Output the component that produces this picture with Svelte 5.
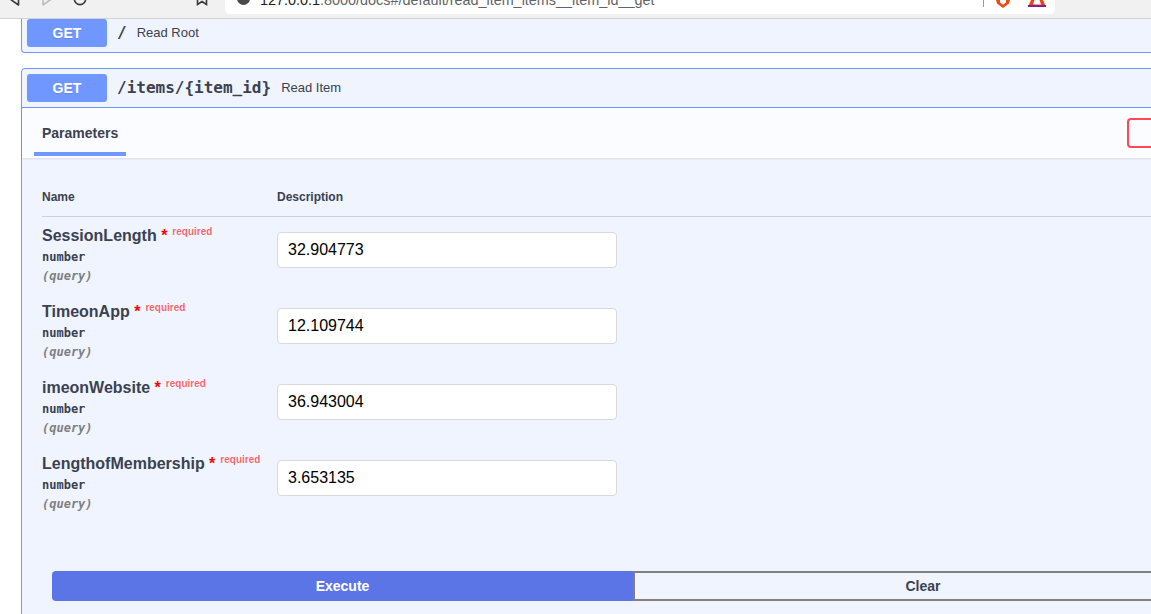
<script>
    const params = [
        { name: 'SessionLength', value: '32.904773' },
        { name: 'TimeonApp', value: '12.109744' },
        { name: 'imeonWebsite', value: '36.943004' },
        { name: 'LengthofMembership', value: '3.653135' }
    ];
</script>

<div class="page">
    <header class="toolbar">
        <div class="nav">
            <svg class="back" width="14" height="14" viewBox="0 0 14 14"><path d="M11.500 1 3 7l8.500 6z" fill="none" stroke="#3a3a3a" stroke-width="1.6" stroke-linejoin="round" /></svg>
            <svg class="forward" width="14" height="14" viewBox="0 0 14 14"><path d="M3 1l8.500 6L3 13z" fill="none" stroke="#bdbdbd" stroke-width="1.6" stroke-linejoin="round" /></svg>
            <svg class="reload" width="14" height="14" viewBox="0 0 14 14"><circle cx="7" cy="7" r="5.6" fill="none" stroke="#3a3a3a" stroke-width="1.6" /></svg>
        </div>
        <svg class="bookmark" width="12" height="14" viewBox="0 0 12 14"><path d="M1.500 0v12.500L6 9.500l4.500 3V0z" fill="none" stroke="#3a3a3a" stroke-width="1.6" /></svg>
        <div class="urlbar">
            <span class="info"><span class="info-dot"></span></span>
            <span class="url"><span class="host">127.0.0.1</span>:8000/docs#/default/read_item_items__item_id__get</span>
            <span class="divider"></span>
            <svg class="shield" width="14" height="8" viewBox="0 0 14 8"><path d="M0 0h14l-1 3.500L7 8 1 3.500z" fill="#f1490f" /><path d="M4 0h6v2.500L7 4.800 4 2.500z" fill="#fff" /></svg>
            <svg class="triangle" width="18" height="7" viewBox="0 0 18 7"><path d="M3 0h12l3 7H0z" fill="#f0440f" /><path d="M6.500 0h5L13 4.500H5z" fill="#fff" /><rect x="0" y="5" width="18" height="2" fill="#8b1a9b" /></svg>
        </div>
    </header>

    <div class="opblock first">
        <div class="summary">
            <span class="method">GET</span>
            <span class="path">/</span>
            <span class="desc">Read Root</span>
        </div>
    </div>

    <div class="opblock second">
        <div class="summary">
            <span class="method">GET</span>
            <span class="path">/items/&#123;item_id&#125;</span>
            <span class="desc">Read Item</span>
        </div>
        <div class="tabs">
            <span class="tab">Parameters</span>
            <span class="cancel"></span>
        </div>
        <div class="body">
            <div class="columns">
                <span class="col-name">Name</span>
                <span>Description</span>
            </div>
            {#each params as p}
                <div class="param">
                    <div class="col-name">
                        <div class="param-name">{p.name}<span class="star">&nbsp;*</span><span class="required">required</span></div>
                        <div class="type">number</div>
                        <div class="in">(query)</div>
                    </div>
                    <input type="text" value={p.value} />
                </div>
            {/each}
            <div class="actions">
                <button type="button" class="execute">Execute</button>
                <button type="button" class="clear">Clear</button>
            </div>
        </div>
    </div>
</div>

<style>
    :global(body) {
        margin: 0;
        background: #fff;
        overflow: hidden;
    }

    .page {
        width: 1151px;
        height: 614px;
        overflow: hidden;
        font-family: "Open Sans", "Liberation Sans", sans-serif;
        color: #3b4151;
    }

    .toolbar {
        height: 18px;
        background: #f1f1f1;
        border-bottom: 1px solid #d4d4d4;
        display: flex;
        overflow: hidden;
    }

    .nav {
        display: flex;
        width: 196px;
        flex: none;
        padding-left: 7px;
        box-sizing: border-box;
        gap: 19px;
        margin-top: -8px;
    }

    .nav svg {
        flex: none;
    }

    .bookmark {
        flex: none;
        margin-top: -8px;
    }

    .urlbar {
        width: 830px;
        height: 14px;
        margin-left: 17px;
        background: #fff;
        border-radius: 0 0 5px 5px;
        display: flex;
        align-items: flex-start;
        flex: none;
        box-sizing: border-box;
        padding-left: 12px;
    }

    .info {
        width: 13px;
        height: 13px;
        border-radius: 50%;
        background: #4a4a4a;
        margin-top: -8px;
        flex: none;
        display: flex;
        justify-content: center;
        align-items: center;
    }

    .info-dot {
        width: 2px;
        height: 2px;
        background: #fff;
    }

    .url {
        font-family: "Liberation Sans", sans-serif;
        font-size: 14.4px;
        line-height: 16px;
        color: #5f6368;
        margin: -8px 0 0 10px;
        width: 723px;
        white-space: nowrap;
        flex: none;
    }

    .host {
        color: #202124;
    }

    .divider {
        width: 1px;
        height: 7px;
        background: #9a9a9a;
        flex: none;
    }

    .shield {
        margin-left: 12px;
        flex: none;
    }

    .triangle {
        margin-left: 18px;
        flex: none;
    }

    .opblock {
        width: 1200px;
        margin-left: 21px;
        box-sizing: border-box;
        background: #eff4ff;
        border: 1px solid #6f97ff;
        border-radius: 4px;
        box-shadow: 0 0 2px rgba(0, 0, 0, 0.06);
        font-family: "Liberation Sans", sans-serif;
    }

    .first {
        border-top: none;
        border-radius: 0 0 4px 4px;
        height: 34px;
        margin-bottom: 15px;
    }

    .first .summary {
        padding-top: 0;
        height: 33px;
    }

    .second {
        height: 600px;
    }

    .summary {
        height: 39px;
        box-sizing: border-box;
        padding: 5px;
        display: flex;
        align-items: center;
    }

    .second .summary {
        border-bottom: 1px solid #6f97ff;
    }

    .method {
        width: 80px;
        height: 28px;
        flex: none;
        box-sizing: border-box;
        background: #6f97ff;
        border-radius: 3px;
        color: #fff;
        font-size: 14px;
        font-weight: 700;
        display: flex;
        align-items: center;
        justify-content: center;
        text-shadow: 0 1px 0 rgba(0, 0, 0, 0.1);
    }

    .path {
        font-family: "DejaVu Sans Mono", monospace;
        font-size: 16px;
        font-weight: 600;
        padding: 0 10px;
        margin-bottom: 2px;
    }

    .desc {
        font-size: 13px;
        color: #3b4151;
        margin-bottom: 2px;
    }

    .tabs {
        height: 50px;
        box-sizing: border-box;
        background: #fbfcff;
        box-shadow: 0 1px 2px rgba(0, 0, 0, 0.1);
        padding-left: 12px;
        display: flex;
    }

    .tab {
        font-size: 14px;
        font-weight: 700;
        padding: 17px 8px 0;
        width: 92px;
        box-sizing: border-box;
        height: 48px;
        border-bottom: 4px solid #6f97ff;
    }

    .cancel {
        width: 60px;
        height: 30px;
        box-sizing: border-box;
        margin: 10px 0 0 1001px;
        border: 2px solid #ff4757;
        border-radius: 4px;
        flex: none;
    }

    .body {
        padding: 0 20px;
    }

    .columns {
        display: flex;
        height: 59px;
        box-sizing: border-box;
        padding-top: 32px;
        font-size: 12px;
        font-weight: 700;
        border-bottom: 1px solid rgba(59, 65, 81, 0.2);
    }

    .col-name {
        width: 235px;
        flex: none;
    }

    .param {
        display: flex;
        height: 76px;
        box-sizing: border-box;
        padding-top: 8px;
    }

    .param-name {
        font-size: 16px;
        font-weight: 600;
        line-height: 22px;
        white-space: nowrap;
        display: flex;
    }

    .star {
        color: #f00;
        white-space: pre;
    }

    .required {
        font-size: 10px;
        color: rgba(255, 0, 0, 0.6);
        line-height: 14px;
        margin-left: 5px;
    }

    .type {
        font-family: "DejaVu Sans Mono", monospace;
        font-size: 12px;
        font-weight: 600;
        line-height: 14px;
        margin-top: 3px;
    }

    .in {
        font-family: "DejaVu Sans Mono", monospace;
        font-size: 12px;
        font-weight: 600;
        font-style: italic;
        color: gray;
        line-height: 14px;
        margin-top: 5px;
    }

    input {
        width: 340px;
        height: 36px;
        box-sizing: border-box;
        margin: 7px 0 0;
        background: #fff;
        border: 1px solid #d9d9d9;
        border-radius: 4px;
        padding: 8px 10px;
        font-family: "Liberation Sans", sans-serif;
        font-size: 16px;
        color: #000;
        flex: none;
    }

    .actions {
        display: flex;
        width: 1161px;
        margin: 50px 0 0 10px;
    }

    button {
        flex: none;
        height: 30px;
        box-sizing: border-box;
        font-family: "Liberation Sans", sans-serif;
        font-size: 14px;
        font-weight: 700;
    }

    .execute {
        width: 581px;
        background: #5b75e6;
        color: #fff;
        border: none;
        border-radius: 4px 0 0 4px;
    }

    .clear {
        width: 580px;
        background: transparent;
        color: #3b4151;
        border: 2px solid gray;
        border-radius: 0 4px 4px 0;
    }
</style>
